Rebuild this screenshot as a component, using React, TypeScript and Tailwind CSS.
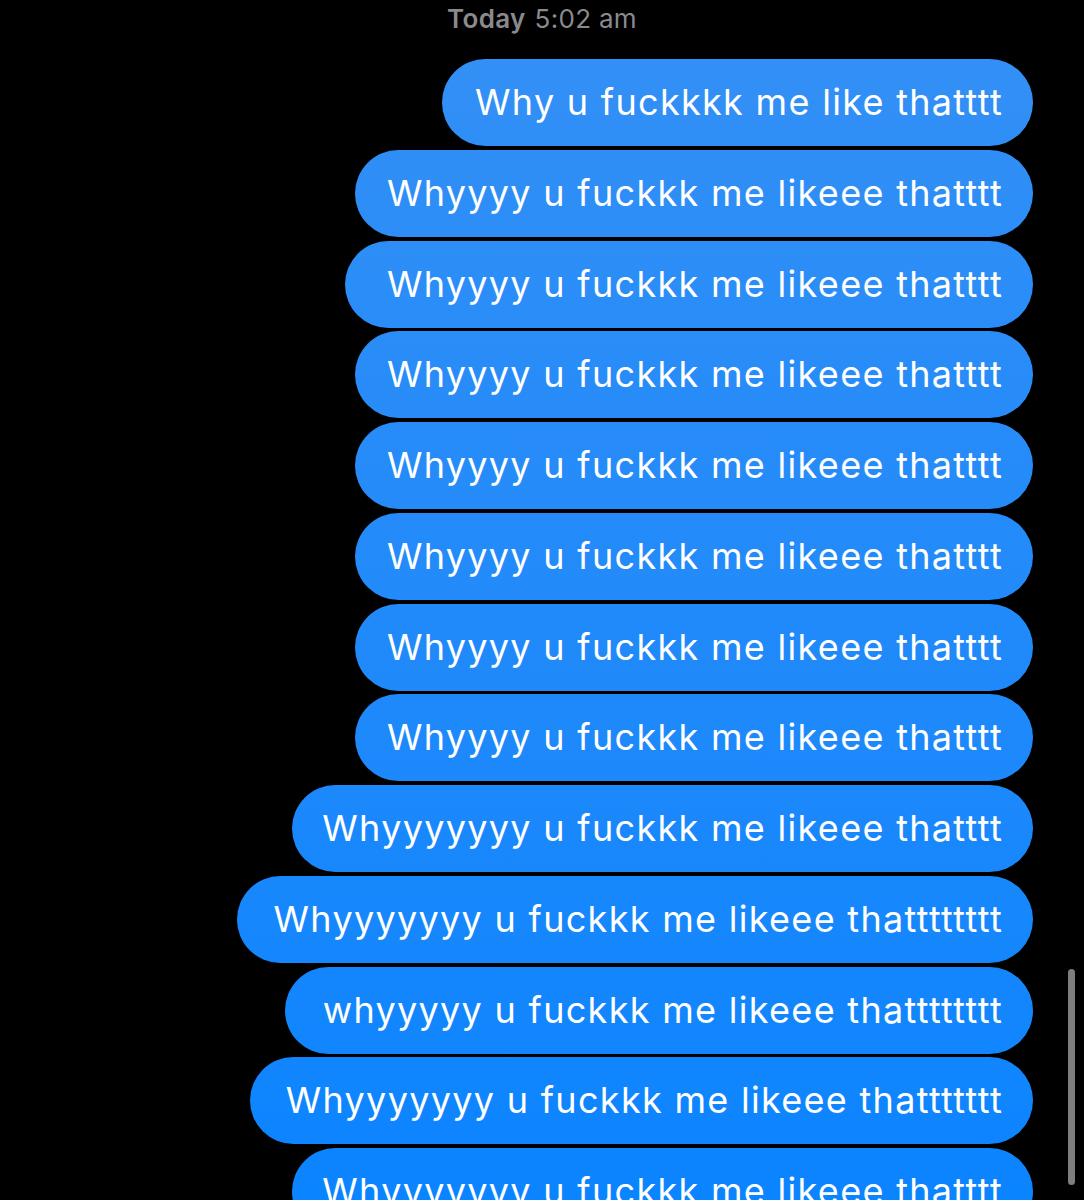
const ys = (n: number) => "y".repeat(n);
const ts = (n: number) => "t".repeat(n);

const MESSAGES = [
  { text: "Why u fuckkkk me like thatttt", width: "w-[591px]" },
  { text: `Wh${ys(4)} u fuckkk me likeee tha${ts(4)}`, width: "w-[678px]" },
  { text: `Wh${ys(4)} u fuckkk me likeee tha${ts(4)}`, width: "w-[688px]" },
  { text: `Wh${ys(4)} u fuckkk me likeee tha${ts(4)}`, width: "w-[678px]" },
  { text: `Wh${ys(4)} u fuckkk me likeee tha${ts(4)}`, width: "w-[678px]" },
  { text: `Wh${ys(4)} u fuckkk me likeee tha${ts(4)}`, width: "w-[678px]" },
  { text: `Wh${ys(4)} u fuckkk me likeee tha${ts(4)}`, width: "w-[678px]" },
  { text: `Wh${ys(4)} u fuckkk me likeee tha${ts(4)}`, width: "w-[678px]" },
  { text: `Wh${ys(7)} u fuckkk me likeee tha${ts(4)}`, width: "w-[741px]" },
  { text: `Wh${ys(7)} u fuckkk me likeee tha${ts(8)}`, width: "w-[796px]" },
  { text: `wh${ys(5)} u fuckkk me likeee tha${ts(8)}`, width: "w-[748px]" },
  { text: `Wh${ys(7)} u fuckkk me likeee tha${ts(7)}`, width: "w-[783px]" },
  { text: `Wh${ys(7)} u fuckkk me likeee tha${ts(4)}`, width: "w-[741px]" },
];

export default function App() {
  return (
    <div
      className="relative h-[1200px] w-[1084px] overflow-hidden bg-black"
      style={{ fontFamily: "Inter, 'Noto Sans', sans-serif" }}
    >
      <div className="flex h-[59px] justify-center pt-[1px] text-[26px] leading-[36px] tracking-[0.3px] text-[#8a8a8e]">
        <span className="font-semibold">Today</span>
        <span className="ml-[9px]">5:02 am</span>
      </div>

      <div className="flex flex-col items-end gap-[3.75px] pr-[51px]">
        {MESSAGES.map((m, i) => (
          <div
            key={i}
            className={`${m.width} flex h-[87px] shrink-0 items-center justify-end rounded-full bg-[linear-gradient(180deg,#3490f5_0%,#1e89fb_60%,#0b84ff_100%)] bg-fixed pr-[30px]`}
          >
            <span className="-mt-[1px] whitespace-nowrap text-[36px] leading-none tracking-[1.3px] text-white">
              {m.text}
            </span>
          </div>
        ))}
      </div>

      <div className="absolute left-[1068px] top-[969px] h-[216px] w-[7px] rounded-full bg-[#7e7e7e]" />
    </div>
  );
}
